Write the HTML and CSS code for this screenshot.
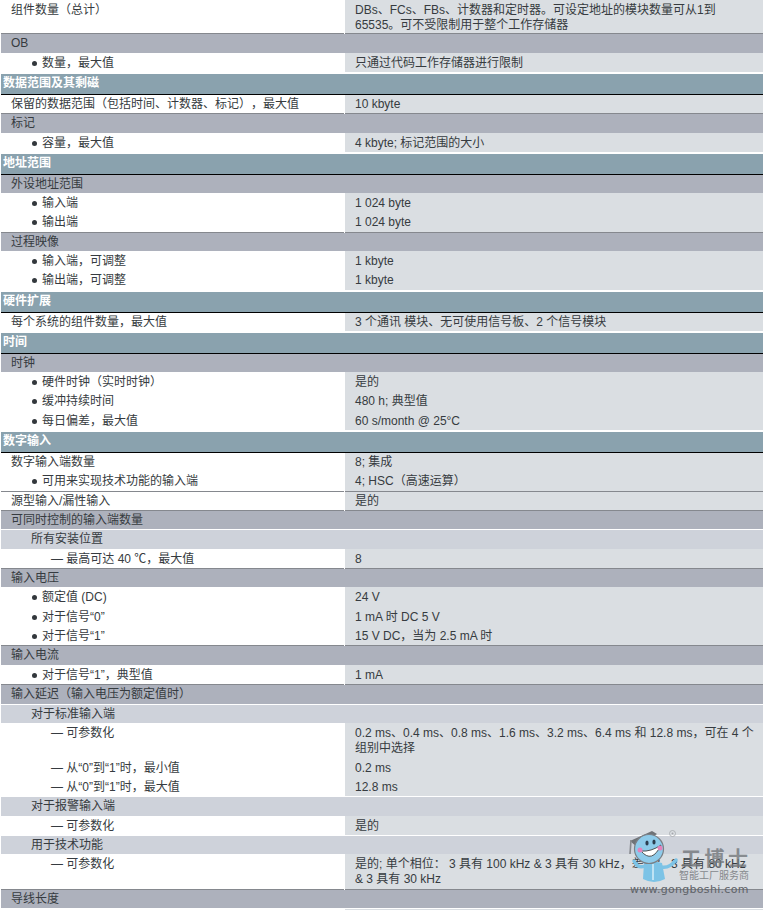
FILE: index.html
```html
<!DOCTYPE html>
<html lang="zh">
<head>
<meta charset="utf-8">
<title>技术规范</title>
<link rel="stylesheet" href="styles.css">
</head>
<body>
<main class="spec">
  <div class="row data rule h34"><div class="k">组件数量（总计）</div><div class="v">DBs、FCs、FBs、计数器和定时器。可设定地址的模块数量可从1到<br>65535。可不受限制用于整个工作存储器</div></div>
  <div class="row group"><div class="k">OB</div></div>
  <div class="row data end"><div class="k b">数量，最大值</div><div class="v">只通过代码工作存储器进行限制</div></div>
  <div class="row sec">数据范围及其剩磁</div>
  <div class="row data rule up"><div class="k">保留的数据范围（包括时间、计数器、标记），最大值</div><div class="v">10 kbyte</div></div>
  <div class="row group"><div class="k">标记</div></div>
  <div class="row data end"><div class="k b">容量，最大值</div><div class="v">4 kbyte; 标记范围的大小</div></div>
  <div class="row sec">地址范围</div>
  <div class="row group h18"><div class="k">外设地址范围</div></div>
  <div class="row data"><div class="k b">输入端</div><div class="v">1 024 byte</div></div>
  <div class="row data rule h21"><div class="k b">输出端</div><div class="v">1 024 byte</div></div>
  <div class="row group h18"><div class="k">过程映像</div></div>
  <div class="row data"><div class="k b">输入端，可调整</div><div class="v">1 kbyte</div></div>
  <div class="row data end h20"><div class="k b">输出端，可调整</div><div class="v">1 kbyte</div></div>
  <div class="row sec">硬件扩展</div>
  <div class="row data end h18 up"><div class="k">每个系统的组件数量，最大值</div><div class="v">3 个通讯 模块、无可使用信号板、2 个信号模块</div></div>
  <div class="row sec">时间</div>
  <div class="row group h18"><div class="k">时钟</div></div>
  <div class="row data"><div class="k b">硬件时钟（实时时钟）</div><div class="v">是的</div></div>
  <div class="row data h20"><div class="k b">缓冲持续时间</div><div class="v">480 h; 典型值</div></div>
  <div class="row data end"><div class="k b">每日偏差，最大值</div><div class="v">60 s/month @ 25°C</div></div>
  <div class="row sec">数字输入</div>
  <div class="row data up"><div class="k">数字输入端数量</div><div class="v">8; 集成</div></div>
  <div class="row data rule h20 up"><div class="k b">可用来实现技术功能的输入端</div><div class="v">4; HSC（高速运算）</div></div>
  <div class="row data rule up"><div class="k">源型输入/漏性输入</div><div class="v">是的</div></div>
  <div class="row group h18 gap"><div class="k">可同时控制的输入端数量</div></div>
  <div class="row sub"><div class="k">所有安装位置</div></div>
  <div class="row data rule h20"><div class="k d">最高可达 40 ℃，最大值</div><div class="v">8</div></div>
  <div class="row group h18"><div class="k">输入电压</div></div>
  <div class="row data h20"><div class="k b">额定值 (DC)</div><div class="v">24 V</div></div>
  <div class="row data"><div class="k b">对于信号“0”</div><div class="v">1 mA 时 DC 5 V</div></div>
  <div class="row data rule h20"><div class="k b">对于信号“1”</div><div class="v">15 V DC，当为 2.5 mA 时</div></div>
  <div class="row group"><div class="k">输入电流</div></div>
  <div class="row data rule h20"><div class="k b">对于信号“1”，典型值</div><div class="v">1 mA</div></div>
  <div class="row group gap"><div class="k">输入延迟（输入电压为额定值时）</div></div>
  <div class="row sub h18"><div class="k">对于标准输入端</div></div>
  <div class="row data h35"><div class="k d">可参数化</div><div class="v">0.2 ms、0.4 ms、0.8 ms、1.6 ms、3.2 ms、6.4 ms 和 12.8 ms，可在 4 个<br>组别中选择</div></div>
  <div class="row data"><div class="k d">从“0”到“1”时，最小值</div><div class="v">0.2 ms</div></div>
  <div class="row data gap"><div class="k d">从“0”到“1”时，最大值</div><div class="v">12.8 ms</div></div>
  <div class="row sub"><div class="k">对于报警输入端</div></div>
  <div class="row data gap"><div class="k d">可参数化</div><div class="v">是的</div></div>
  <div class="row sub h18"><div class="k">用于技术功能</div></div>
  <div class="row data h36 rule"><div class="k d">可参数化</div><div class="v">是的; 单个相位： 3 具有 100 kHz &amp; 3 具有 30 kHz，差分： 3 具有 80 kHz<br>&amp; 3 具有 30 kHz</div></div>
  <div class="row group h18 gap"><div class="k">导线长度</div></div>
  <div class="row data"><div class="k"></div><div class="v"></div></div>
</main>
<aside class="mark">
  <svg class="mascot" viewBox="628 826 60 62" aria-hidden="true">
    <path d="M644 863 Q653 860 662 863 L665 879 Q654 885 643 879 Z" fill="#7cc3e6"/>
    <path d="M653 864 V880" stroke="#d6eef8" stroke-width="1.5"/>
    <path d="M645 866 Q638 869 634 861 M661 867 Q669 869 676 860" stroke="#7cc3e6" stroke-width="3.5" fill="none" stroke-linecap="round"/>
    <path d="M630 841 L652 831 L657 834 L637 847 Z" fill="#6f7377"/>
    <path d="M631 840 L630 854" stroke="#85888c" stroke-width="1.6" fill="none"/>
    <circle cx="649" cy="849" r="14.500" fill="#8ecbea" stroke="#7b8086" stroke-width="1.2"/>
    <path d="M641 851 Q652 864 661 845 Q651 852 641 851 Z" fill="#fff" stroke="#444" stroke-width=".9"/>
    <ellipse cx="647" cy="843" rx="1.600" ry="2.600" fill="#2c3e50"/>
    <ellipse cx="654" cy="842" rx="1.600" ry="2.600" fill="#2c3e50"/>
    <circle cx="640" cy="850" r="2.500" fill="#e383bc"/>
    <circle cx="660" cy="848" r="2.500" fill="#e383bc"/>
    <circle cx="672.500" cy="833.500" r="3" fill="none" stroke="#a5a8ac" stroke-width=".8"/>
    <circle cx="672.500" cy="833.500" r="1" fill="#a5a8ac"/>
  </svg>
  <div class="brand">工博士</div>
  <div class="tag">智能工厂服务商</div>
  <div class="url">www.gongboshi.com</div>
</aside>
</body>
</html>
```
FILE: styles.css
```css
* { box-sizing: border-box; }
html, body { margin: 0; padding: 0; }
body {
  width: 763px; height: 910px; overflow: hidden; position: relative; background: #fff;
  font: 12px/15px "Liberation Sans", "Noto Sans CJK SC", sans-serif; color: #363b40;
  text-spacing-trim: space-all;
}
.spec { padding-left: 1px; }
.row { display: grid; grid-template-columns: 343px 1fr; height: 19px; }
.k { padding: 3px 0 0 10px; white-space: nowrap; }
.v { padding: 3px 0 0 10px; margin-left: 1px; background: #dadee2; white-space: nowrap; }
.up .k, .up .v { padding-top: 2px; }
.h18 { height: 18px; }
.h20 { height: 20px; }
.h21 { height: 21px; }
.h34 { height: 34px; }
.h35 { height: 35px; }
.h36 { height: 36px; }
.group { background: #adb1bc; }
.sub { background: #ced2da; }
.group .k, .sub .k { grid-column: 1 / 3; padding-top: 2px; }
.sub .k { padding-left: 30px; }
.rule .k, .rule .v { border-bottom: 1px solid #85888e; }
.end { margin-bottom: 2px; }
.gap { margin-bottom: 1px; }
.b { padding-left: 31px; }
.b::before { content: ""; display: inline-block; width: 5px; height: 5px; margin-right: 5px; border-radius: 50%; background: #33383d; vertical-align: 1px; }
.d { padding-left: 50px; }
.d::before { content: "— "; }
.sec {
  display: block; height: 21px; padding: 2px 0 0 2px; background: #8aa2ae;
  border-bottom: 1px solid #000; color: #fff; font-weight: 700;
}
.mark { position: absolute; left: 628px; top: 826px; width: 135px; height: 74px; color: #74787c; }
.mascot { position: absolute; left: 0; top: 0; width: 60px; height: 62px; }
.brand { position: absolute; left: 53px; top: 20px; font: 700 20px/24px "Noto Sans CJK SC", sans-serif; letter-spacing: 3.5px; opacity: .8; }
.tag { position: absolute; left: 51px; top: 43px; font: 10px/12px "Noto Sans CJK SC", sans-serif; color: #85888c; }
.url { position: absolute; left: 2px; top: 57px; font: 11px/14px "DejaVu Sans", sans-serif; letter-spacing: .3px; color: #5f6368; }
```
